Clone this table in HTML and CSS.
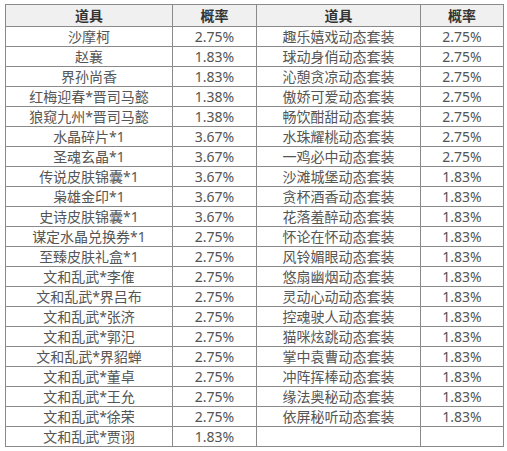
FILE: index.html
```html
<!DOCTYPE html>
<html lang="zh-CN">
<head>
<meta charset="UTF-8">
<meta name="viewport" content="width=device-width, initial-scale=1.0">
<title>道具概率</title>
<link rel="stylesheet" href="styles.css">
</head>
<body>

<table class="rate-table">
    <colgroup>
        <col class="col-name">
        <col class="col-rate">
        <col class="col-name2">
        <col class="col-rate2">
    </colgroup>
    <thead>
        <tr>
            <th>道具</th>
            <th>概率</th>
            <th>道具</th>
            <th>概率</th>
        </tr>
    </thead>
    <tbody>
        <tr><td>沙摩柯</td><td>2.75%</td><td>趣乐嬉戏动态套装</td><td>2.75%</td></tr>
        <tr><td>赵襄</td><td>1.83%</td><td>球动身俏动态套装</td><td>2.75%</td></tr>
        <tr><td>界孙尚香</td><td>1.83%</td><td>沁憩贪凉动态套装</td><td>2.75%</td></tr>
        <tr><td>红梅迎春*晋司马懿</td><td>1.38%</td><td>傲娇可爱动态套装</td><td>2.75%</td></tr>
        <tr><td>狼窥九州*晋司马懿</td><td>1.38%</td><td>畅饮酣甜动态套装</td><td>2.75%</td></tr>
        <tr><td>水晶碎片*1</td><td>3.67%</td><td>水珠耀桃动态套装</td><td>2.75%</td></tr>
        <tr><td>圣魂玄晶*1</td><td>3.67%</td><td>一鸡必中动态套装</td><td>2.75%</td></tr>
        <tr><td>传说皮肤锦囊*1</td><td>3.67%</td><td>沙滩城堡动态套装</td><td>1.83%</td></tr>
        <tr><td>枭雄金印*1</td><td>3.67%</td><td>贪杯酒香动态套装</td><td>1.83%</td></tr>
        <tr><td>史诗皮肤锦囊*1</td><td>3.67%</td><td>花落羞醉动态套装</td><td>1.83%</td></tr>
        <tr><td>谋定水晶兑换券*1</td><td>2.75%</td><td>怀论在怀动态套装</td><td>1.83%</td></tr>
        <tr><td>至臻皮肤礼盒*1</td><td>2.75%</td><td>风铃媚眼动态套装</td><td>1.83%</td></tr>
        <tr><td>文和乱武*李傕</td><td>2.75%</td><td>悠扇幽烟动态套装</td><td>1.83%</td></tr>
        <tr><td>文和乱武*界吕布</td><td>2.75%</td><td>灵动心动动态套装</td><td>1.83%</td></tr>
        <tr><td>文和乱武*张济</td><td>2.75%</td><td>控魂驶人动态套装</td><td>1.83%</td></tr>
        <tr><td>文和乱武*郭汜</td><td>2.75%</td><td>猫咪炫跳动态套装</td><td>1.83%</td></tr>
        <tr><td>文和乱武*界貂蝉</td><td>2.75%</td><td>掌中袁曹动态套装</td><td>1.83%</td></tr>
        <tr><td>文和乱武*董卓</td><td>2.75%</td><td>冲阵挥棒动态套装</td><td>1.83%</td></tr>
        <tr><td>文和乱武*王允</td><td>2.75%</td><td>缘法奥秘动态套装</td><td>1.83%</td></tr>
        <tr><td>文和乱武*徐荣</td><td>2.75%</td><td>依屏秘听动态套装</td><td>1.83%</td></tr>
        <tr><td>文和乱武*贾诩</td><td>1.83%</td><td></td><td></td></tr>
    </tbody>
</table>

</body>
</html>
```

FILE: styles.css
```css
body {
    margin: 0;
    padding: 4px 5px;
    background: #fff;
}
.rate-table {
    border-collapse: collapse;
    table-layout: fixed;
    width: 498px;
    font-family: "Noto Sans", "Noto Sans CJK SC", sans-serif;
    font-size: 14px;
    color: #555;
}
.col-name {
    width: 167px;
}
.col-rate {
    width: 84px;
}
.col-name2 {
    width: 164px;
}
.col-rate2 {
    width: 83px;
}
.rate-table th,
.rate-table td {
    border: 1px solid #8a8a8a;
    padding: 0;
    text-align: center;
    white-space: nowrap;
    overflow: hidden;
}
.rate-table th {
    height: 21px;
    line-height: 21px;
    background: #f0f0f0;
    font-weight: bold;
    color: #333;
}
.rate-table td {
    height: 19px;
    line-height: 19px;
}
```
